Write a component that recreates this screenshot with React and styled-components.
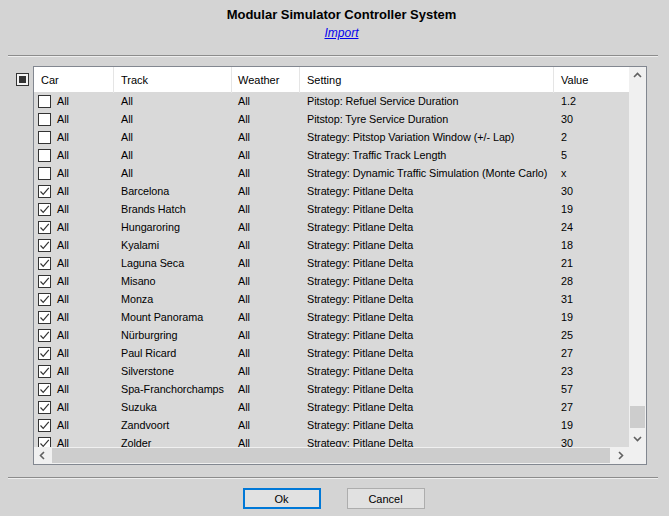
import styled, { createGlobalStyle } from 'styled-components'

const GlobalStyle = createGlobalStyle`
    html, body {
        margin: 0;
        padding: 0;
        background: #d4d4d4;
    }
    * { box-sizing: border-box; }
`

const rows = [
    [false, 'All', 'All', 'All', 'Pitstop: Refuel Service Duration', '1.2'],
    [false, 'All', 'All', 'All', 'Pitstop: Tyre Service Duration', '30'],
    [false, 'All', 'All', 'All', 'Strategy: Pitstop Variation Window (+/- Lap)', '2'],
    [false, 'All', 'All', 'All', 'Strategy: Traffic Track Length', '5'],
    [false, 'All', 'All', 'All', 'Strategy: Dynamic Traffic Simulation (Monte Carlo)', 'x'],
    [true, 'All', 'Barcelona', 'All', 'Strategy: Pitlane Delta', '30'],
    [true, 'All', 'Brands Hatch', 'All', 'Strategy: Pitlane Delta', '19'],
    [true, 'All', 'Hungaroring', 'All', 'Strategy: Pitlane Delta', '24'],
    [true, 'All', 'Kyalami', 'All', 'Strategy: Pitlane Delta', '18'],
    [true, 'All', 'Laguna Seca', 'All', 'Strategy: Pitlane Delta', '21'],
    [true, 'All', 'Misano', 'All', 'Strategy: Pitlane Delta', '28'],
    [true, 'All', 'Monza', 'All', 'Strategy: Pitlane Delta', '31'],
    [true, 'All', 'Mount Panorama', 'All', 'Strategy: Pitlane Delta', '19'],
    [true, 'All', 'Nürburgring', 'All', 'Strategy: Pitlane Delta', '25'],
    [true, 'All', 'Paul Ricard', 'All', 'Strategy: Pitlane Delta', '27'],
    [true, 'All', 'Silverstone', 'All', 'Strategy: Pitlane Delta', '23'],
    [true, 'All', 'Spa-Franchorchamps', 'All', 'Strategy: Pitlane Delta', '57'],
    [true, 'All', 'Suzuka', 'All', 'Strategy: Pitlane Delta', '27'],
    [true, 'All', 'Zandvoort', 'All', 'Strategy: Pitlane Delta', '19'],
    [true, 'All', 'Zolder', 'All', 'Strategy: Pitlane Delta', '30'],
]

const columns = '80px 118px 68px 254px 75px'

const Window = styled.div`
    width: 669px;
    height: 516px;
    display: flex;
    flex-direction: column;
    font-family: "Liberation Sans", Arial, sans-serif;
    color: #000;
    overflow: hidden;
`

const Heading = styled.div`
    display: flex;
    flex-direction: column;
    align-items: center;
    padding-top: 7px;
    height: 55px;
`

const Title = styled.div`
    font-weight: bold;
    font-size: 13px;
    line-height: 16px;
    margin-left: 14px;
`

const ImportLink = styled.a`
    margin-top: 3px;
    font-size: 12px;
    line-height: 15px;
    font-style: italic;
    color: #0000ee;
    text-decoration: underline;
    margin-left: 14px;
    cursor: pointer;
`

const Separator = styled.div`
    margin: 0 11px 0 8px;
    height: 2px;
    border-top: 1px solid #8c8c8c;
    border-bottom: 1px solid #eeeeee;
`

const Body = styled.div`
    display: flex;
    align-items: flex-start;
    padding: 9px 0 0 16px;
    height: 420px;
`

const Box = styled.span`
    width: 13px;
    height: 13px;
    flex: none;
    display: flex;
    align-items: center;
    justify-content: center;
    background: #fff;
    border: 1px solid #333;
`

const Mixed = styled.span`
    width: 7px;
    height: 7px;
    background: #333;
`

const SelectAll = styled(Box)`
    margin-top: 7px;
    background: #f3f3f3;
`

const ListView = styled.div`
    margin-left: 4px;
    width: 614px;
    height: 399px;
    border: 1px solid #828790;
    background: #d9d9d9;
    display: grid;
    grid-template-columns: 595px 17px;
    grid-template-rows: 380px 17px;
    overflow: hidden;
`

const Content = styled.div`
    overflow: hidden;
    display: flex;
    flex-direction: column;
`

const HeaderRow = styled.div`
    display: grid;
    grid-template-columns: ${columns};
    height: 25px;
    flex: none;
    background: #fff;
`

const HeaderCell = styled.div`
    padding-left: ${p => p.$pad || 7}px;
    font-size: 11px;
    line-height: 26px;
    border-right: 1px solid ${p => p.$last ? 'transparent' : '#e5e5e5'};
`

const Row = styled.div`
    display: grid;
    grid-template-columns: ${columns};
    height: 18px;
    flex: none;
    font-size: 10.8px;
    letter-spacing: -0.05px;
    line-height: 18px;
`

const Cell = styled.div`
    padding-left: ${p => p.$pad || 7}px;
    white-space: nowrap;
    overflow: hidden;
    display: flex;
    align-items: center;
    gap: 6px;
`

const RowBox = styled(Box)`
    width: 13px;
    height: 13px;
`

const ScrollTrack = styled.div`
    background: #f0f0f0;
    display: flex;
    flex-direction: ${p => p.$horizontal ? 'row' : 'column'};
    align-items: center;
`

const Arrow = styled.div`
    width: 17px;
    height: 17px;
    flex: none;
    display: flex;
    align-items: center;
    justify-content: center;
`

const VThumbSpace = styled.div`
    flex: 1;
    width: 100%;
    display: flex;
    flex-direction: column;
    justify-content: flex-end;
    padding: 0 1px 2px;
`

const VThumb = styled.div`
    height: 22px;
    background: #cdcdcd;
`

const HThumbSpace = styled.div`
    flex: 1;
    height: 100%;
    padding: 1px 2px 1px 1px;
`

const HThumb = styled.div`
    height: 100%;
    background: #cdcdcd;
`

const Corner = styled.div`
    background: #f0f0f0;
`

const Footer = styled.div`
    display: flex;
    justify-content: center;
    gap: 26px;
    padding: 9px 2px 0 0;
`

const Button = styled.button`
    width: 78px;
    height: 21px;
    font-family: "Liberation Sans", Arial, sans-serif;
    font-size: 11px;
    color: #000;
    background: #e1e1e1;
    border: ${p => p.$default ? '2px solid #0078d7' : '1px solid #adadad'};
    padding: 0;
`

const Chevron = ({ d }) => (
    <svg width="9" height="9" viewBox="0 0 9 9">
        <path d={d} fill="none" stroke="#606060" strokeWidth="1.6" />
    </svg>
)

const Check = () => (
    <svg width="11" height="11" viewBox="0 0 11 11">
        <path d="M1.5 5.5 L4.2 8.3 L9.8 1.8" fill="none" stroke="#333" strokeWidth="1.2" />
    </svg>
)

const App = () => {
    return (
        <Window>
            <GlobalStyle />
            <Heading>
                <Title>Modular Simulator Controller System</Title>
                <ImportLink>Import</ImportLink>
            </Heading>
            <Separator />
            <Body>
                <SelectAll><Mixed /></SelectAll>
                <ListView>
                    <Content>
                        <HeaderRow>
                            <HeaderCell>Car</HeaderCell>
                            <HeaderCell>Track</HeaderCell>
                            <HeaderCell $pad={6}>Weather</HeaderCell>
                            <HeaderCell>Setting</HeaderCell>
                            <HeaderCell $last>Value</HeaderCell>
                        </HeaderRow>
                        {rows.map(([checked, car, track, weather, setting, value], i) => (
                            <Row key={i}>
                                <Cell $pad={4}>
                                    <RowBox>{checked && <Check />}</RowBox>
                                    {car}
                                </Cell>
                                <Cell>{track}</Cell>
                                <Cell $pad={6}>{weather}</Cell>
                                <Cell>{setting}</Cell>
                                <Cell>{value}</Cell>
                            </Row>
                        ))}
                    </Content>
                    <ScrollTrack>
                        <Arrow><Chevron d="M1 6 L4.5 2.5 L8 6" /></Arrow>
                        <VThumbSpace><VThumb /></VThumbSpace>
                        <Arrow><Chevron d="M1 3 L4.5 6.5 L8 3" /></Arrow>
                    </ScrollTrack>
                    <ScrollTrack $horizontal>
                        <Arrow><Chevron d="M6 1 L2.5 4.5 L6 8" /></Arrow>
                        <HThumbSpace><HThumb /></HThumbSpace>
                        <Arrow><Chevron d="M3 1 L6.5 4.5 L3 8" /></Arrow>
                    </ScrollTrack>
                    <Corner />
                </ListView>
            </Body>
            <Separator />
            <Footer>
                <Button $default>Ok</Button>
                <Button>Cancel</Button>
            </Footer>
        </Window>
    )
}

export default App
